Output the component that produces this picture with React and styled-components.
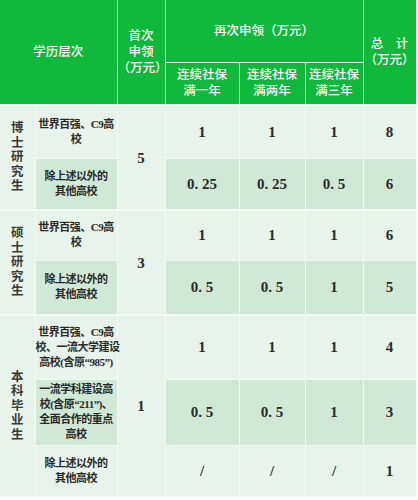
import styled, { createGlobalStyle } from 'styled-components';

const GlobalStyle = createGlobalStyle`
  * { box-sizing: border-box; }
  body {
    margin: 0;
    background: #ffffff;
    font-family: 'Liberation Serif', 'Noto Sans CJK SC', serif;
  }
`;

const Page = styled.div`
  width: 418px;
  height: 500px;
  padding: 0 2px 4px 0;
  background: #ffffff;
  overflow: hidden;
`;

const Table = styled.table`
  width: 416px;
  table-layout: fixed;
  border-collapse: collapse;
  color: #2a2a2a;
`;

const HeadCell = styled.th`
  background: #10b83c;
  color: #ffffff;
  font-size: 12.5px;
  font-weight: 500;
  line-height: 16px;
  text-align: center;
  vertical-align: middle;
  padding: 0;
  border: 1px solid #e6f6ea;
  border-top: none;
  white-space: nowrap;
  ${({ $first }) => $first && 'border-left: none;'}
`;

const Cell = styled.td`
  background: ${({ $dark }) => ($dark ? '#d1e8d7' : '#e8f3eb')};
  text-align: center;
  vertical-align: middle;
  padding: 0;
  border: 1px solid #f3faf5;
  ${({ $first }) => $first && 'border-left: none;'}
  ${({ $groupTop }) => $groupTop && 'border-top: 2px solid #f6fbf7;'}
`;

const LevelText = styled.div`
  width: 14px;
  margin: 0 auto;
  font-size: 12.5px;
  line-height: 14.5px;
  font-weight: 600;
  color: #3a3a3a;
  word-break: break-all;
`;

const SchoolText = styled.div`
  font-size: 11px;
  line-height: 15px;
  font-weight: 600;
  letter-spacing: -0.5px;
  white-space: nowrap;
`;

const Num = styled.span`
  font-family: 'Liberation Serif', serif;
  font-size: 15px;
  font-weight: 700;
  color: #2a2a2a;
`;

const Row = styled.tr`
  height: ${({ $h }) => $h}px;
`;

const groups = [
  {
    level: '博士研究生',
    first: '5',
    rows: [
      { h: 53, school: ['世界百强、C9高', '校'], v: ['1', '1', '1', '8'] },
      { h: 52, school: ['除上述以外的', '其他高校'], v: ['0. 25', '0. 25', '0. 5', '6'] },
    ],
  },
  {
    level: '硕士研究生',
    first: '3',
    rows: [
      { h: 50, school: ['世界百强、C9高', '校'], v: ['1', '1', '1', '6'] },
      { h: 55, school: ['除上述以外的', '其他高校'], v: ['0. 5', '0. 5', '1', '5'] },
    ],
  },
  {
    level: '本科毕业生',
    first: '1',
    rows: [
      { h: 64, school: ['世界百强、C9高', '校、一流大学建设', '高校(含原“985”)'], v: ['1', '1', '1', '4'] },
      { h: 66, school: ['一流学科建设高', '校(含原“211”)、', '全面合作的重点', '高校'], v: ['0. 5', '0. 5', '1', '3'] },
      { h: 51, school: ['除上述以外的', '其他高校'], v: ['/', '/', '/', '1'] },
    ],
  },
];

function Lines({ lines }) {
  return lines.map((l, i) => (
    <span key={i}>
      {i > 0 && <br />}
      {l}
    </span>
  ));
}

export default function App() {
  return (
    <Page>
      <GlobalStyle />
      <Table>
        <colgroup>
          <col style={{ width: 35 }} />
          <col style={{ width: 82 }} />
          <col style={{ width: 48 }} />
          <col style={{ width: 74 }} />
          <col style={{ width: 66 }} />
          <col style={{ width: 58 }} />
          <col style={{ width: 53 }} />
        </colgroup>
        <thead>
          <Row $h={62}>
            <HeadCell $first colSpan={2} rowSpan={2}>学历层次</HeadCell>
            <HeadCell rowSpan={2}>
              <Lines lines={['首次', '申领', '（万元）']} />
            </HeadCell>
            <HeadCell colSpan={3}>再次申领（万元）</HeadCell>
            <HeadCell rowSpan={2}>
              <Lines lines={['总　计', '（万元）']} />
            </HeadCell>
          </Row>
          <Row $h={43}>
            <HeadCell><Lines lines={['连续社保', '满一年']} /></HeadCell>
            <HeadCell><Lines lines={['连续社保', '满两年']} /></HeadCell>
            <HeadCell><Lines lines={['连续社保', '满三年']} /></HeadCell>
          </Row>
        </thead>
        <tbody>
          {groups.map((g) =>
            g.rows.map((r, i) => {
              const dark = i === 1;
              const top = i === 0;
              return (
                <Row key={g.level + i} $h={r.h}>
                  {top && (
                    <Cell $first $groupTop rowSpan={g.rows.length}>
                      <LevelText>{g.level}</LevelText>
                    </Cell>
                  )}
                  <Cell $dark={dark} $groupTop={top}>
                    <SchoolText><Lines lines={r.school} /></SchoolText>
                  </Cell>
                  {top && (
                    <Cell $groupTop rowSpan={g.rows.length}>
                      <Num>{g.first}</Num>
                    </Cell>
                  )}
                  {r.v.map((v, j) => (
                    <Cell key={j} $dark={dark} $groupTop={top}>
                      <Num>{v}</Num>
                    </Cell>
                  ))}
                </Row>
              );
            })
          )}
        </tbody>
      </Table>
    </Page>
  );
}
